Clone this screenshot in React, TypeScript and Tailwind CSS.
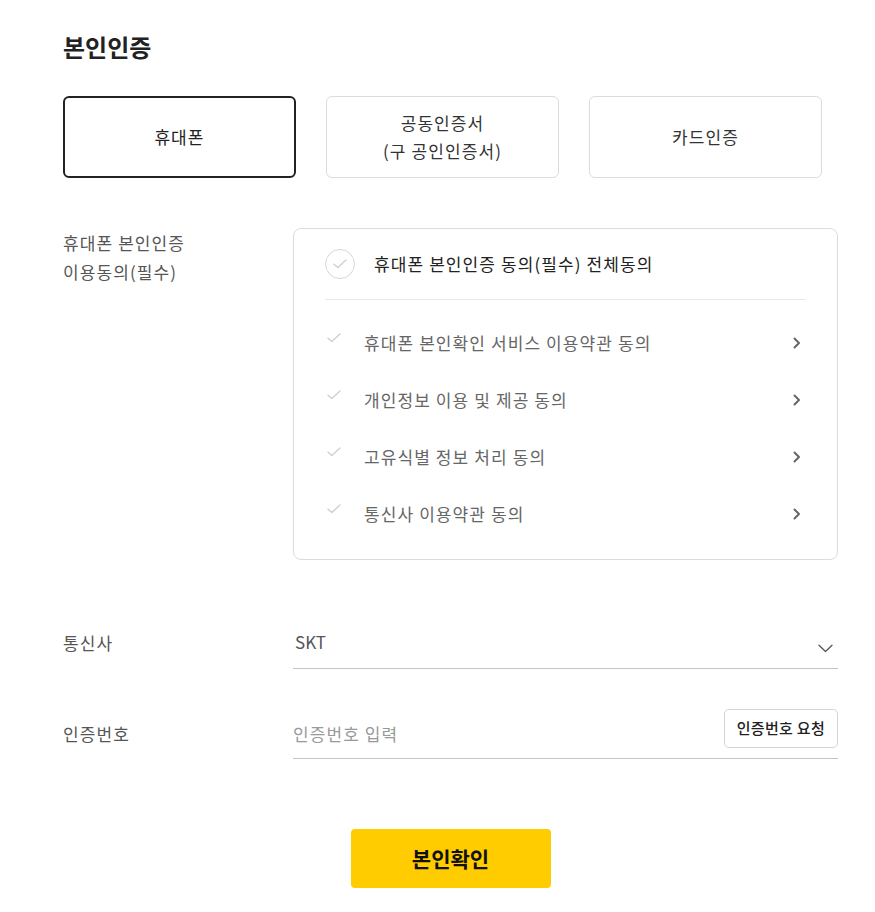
import React from "react";

const font = { fontFamily: '"Noto Sans CJK KR", "Noto Sans", sans-serif' };

function SmallCheck({ className = "" }: { className?: string }) {
  return (
    <svg className={className} width="14" height="10" viewBox="0 0 14 10" fill="none">
      <path d="M1 5.2L4.8 8.6L13 1" stroke="#cfcfcf" strokeWidth="1.4" strokeLinecap="round" strokeLinejoin="round" />
    </svg>
  );
}

function ChevronRight() {
  return (
    <svg width="8" height="12" viewBox="0 0 8 12" fill="none">
      <path d="M1.5 1.5L6 6L1.5 10.5" stroke="#666" strokeWidth="2" strokeLinecap="round" strokeLinejoin="round" />
    </svg>
  );
}

function ChevronDown() {
  return (
    <svg width="15" height="9" viewBox="0 0 15 9" fill="none">
      <path d="M1 1.2L7.5 7.5L14 1.2" stroke="#555" strokeWidth="1.3" strokeLinecap="round" strokeLinejoin="round" />
    </svg>
  );
}

const items = [
  "휴대폰 본인확인 서비스 이용약관 동의",
  "개인정보 이용 및 제공 동의",
  "고유식별 정보 처리 동의",
  "통신사 이용약관 동의",
];

export default function App() {
  return (
    <div className="min-h-[912px] w-[875px] bg-white" style={font}>
      <div className="pl-[63px] pr-[37px] pt-[30px]">
        <h1 className="text-[24px] leading-[33px] font-bold text-[#222]">본인인증</h1>

        <div className="mt-[33px] grid w-[759px] grid-cols-3 gap-[30px] text-[17px] tracking-[1.1px]">
          <button className="flex h-[82px] items-center justify-center rounded-[6px] border-2 border-[#222] text-[#222]">
            휴대폰
          </button>
          <button className="flex h-[82px] flex-col items-center justify-center rounded-[6px] border border-[#dcdcdc] leading-[28px] text-[#333]">
            <span>공동인증서</span>
            <span>(구 공인인증서)</span>
          </button>
          <button className="flex h-[82px] items-center justify-center rounded-[6px] border border-[#dcdcdc] text-[#333]">
            카드인증
          </button>
        </div>

        <div className="mt-[50px] flex tracking-[1.1px]">
          <div className="w-[230px] text-[17px] leading-[29px] text-[#555]">
            <div>휴대폰 본인인증</div>
            <div>이용동의(필수)</div>
          </div>
          <div className="flex-1 rounded-[8px] border border-[#dcdcdc] px-[31px]">
            <div className="flex items-center border-b border-[#e8e8e8] pt-[20px] pb-[20px]">
              <span className="flex h-[30px] w-[30px] items-center justify-center rounded-full border border-[#d6d6d6]">
                <SmallCheck />
              </span>
              <span className="ml-[19px] text-[17px] text-[#222]">휴대폰 본인인증 동의(필수) 전체동의</span>
            </div>
            <ul className="pt-[14px] pb-[17px]">
              {items.map((t) => (
                <li key={t} className="flex h-[57px] items-center">
                  <SmallCheck className="mb-[10px] ml-[2px]" />
                  <span className="ml-[23px] flex-1 text-[17px] text-[#666]">{t}</span>
                  <span className="mr-[5px]">
                    <ChevronRight />
                  </span>
                </li>
              ))}
            </ul>
          </div>
        </div>

        <div className="mt-[59px] flex tracking-[1.1px]">
          <div className="flex h-[50px] w-[230px] items-center pb-[2px] text-[17px] text-[#555]">통신사</div>
          <div className="flex h-[50px] flex-1 items-center border-b border-[#c4c4c4]">
            <span className="ml-[2px] flex-1 pb-[4px] text-[17px] tracking-normal text-[#555]">SKT</span>
            <span className="mr-[5px] mt-[10px]">
              <ChevronDown />
            </span>
          </div>
        </div>

        <div className="mt-[40px] flex tracking-[1.1px]">
          <div className="flex h-[50px] w-[230px] items-center text-[17px] text-[#555]">인증번호</div>
          <div className="flex h-[50px] flex-1 border-b border-[#c4c4c4]">
            <span className="flex flex-1 items-center text-[17px] text-[#999]">인증번호 입력</span>
            <button className="h-[39px] rounded-[5px] border border-[#d4d4d4] px-[12px] text-[15px] font-medium tracking-[0.3px] text-[#222]">
              인증번호 요청
            </button>
          </div>
        </div>

        <div className="mt-[70px] flex justify-center">
          <button className="h-[59px] w-[200px] rounded-[4px] bg-[#ffcc00] text-[21px] font-bold text-[#111]">
            본인확인
          </button>
        </div>
      </div>
    </div>
  );
}
